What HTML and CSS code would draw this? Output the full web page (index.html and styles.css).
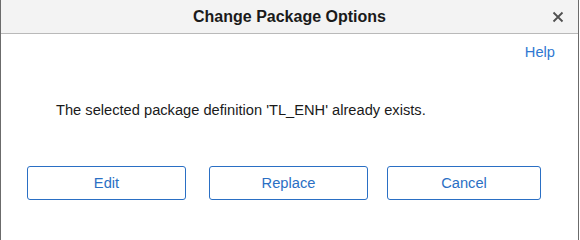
FILE: index.html
```html
<!DOCTYPE html>
<html lang="en">
<head>
    <meta charset="UTF-8">
    <title>Change Package Options</title>
    <link rel="stylesheet" href="styles.css">
</head>
<body>
    <div class="dialogo">
        <div class="cabecera">
            <span class="titulo">Change Package Options</span>
            <span class="cerrar">
                <svg width="12" height="12" viewBox="0 0 12 12">
                    <path d="M1.5 1.5L10.5 10.5M10.5 1.5L1.5 10.5" stroke="#505050" stroke-width="1.8"/>
                </svg>
            </span>
        </div>
        <div class="contenido">
            <div class="ayuda"><a href="#">Help</a></div>
            <p class="mensaje">The selected package definition 'TL_ENH' already exists.</p>
            <div class="botones">
                <button class="boton ancho">Edit</button>
                <button class="boton ancho">Replace</button>
                <button class="boton">Cancel</button>
            </div>
        </div>
    </div>
</body>
</html>
```

FILE: styles.css
```css
body {
    margin: 0;
    font-family: "Liberation Sans", Arial, sans-serif;
    background-color: #fff;
}

.dialogo {
    width: 577px;
    height: 240px;
    border-left: 1px solid #6b6b6b;
    border-right: 1px solid #6b6b6b;
    background-color: #fff;
}

.cabecera {
    position: relative;
    height: 33px;
    background-color: #f3f3f3;
    border-bottom: 1px solid #b9b9b9;
    text-align: center;
}

.titulo {
    display: inline-block;
    line-height: 34px;
    font-size: 16px;
    font-weight: bold;
    color: #1a1a1a;
}

.cerrar {
    position: absolute;
    right: 14px;
    top: 11px;
    line-height: 0;
}

.contenido {
    padding: 0 23px 0 26px;
}

.ayuda {
    text-align: right;
    padding-top: 8px;
    font-size: 14.67px;
    line-height: 20px;
}

.ayuda a {
    color: #2f78d2;
    text-decoration: none;
}

.mensaje {
    margin: 38px 0 0 29px;
    font-size: 14.67px;
    line-height: 20px;
    color: #1a1a1a;
}

.botones {
    display: flex;
    margin-top: 46px;
}

.boton {
    box-sizing: border-box;
    flex: 0 0 154px;
    height: 34px;
    margin-right: 23px;
    border: 1px solid #2a6fc4;
    border-radius: 3px;
    background-color: #fff;
    color: #2a6fc4;
    font-family: "Liberation Sans", Arial, sans-serif;
    font-size: 14.67px;
    padding: 0;
}

.ancho {
    flex-basis: 159px;
}

.boton:nth-child(2) {
    margin-right: 19px;
}
```
